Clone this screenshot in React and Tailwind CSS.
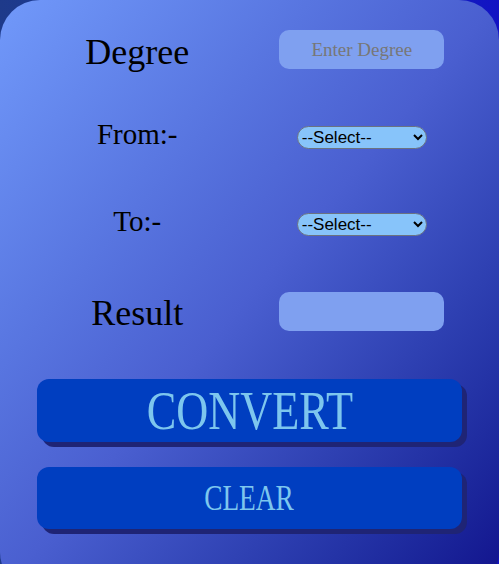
export default function App() {
  const serif = { fontFamily: '"Liberation Serif", "DejaVu Serif", serif' };
  return (
    <div className="h-[564px] w-[499px] overflow-hidden bg-gradient-to-r from-[#1e3a8a] to-[#1212c4]">
      <div
        className="h-[592px] w-[499px] rounded-[40px] bg-gradient-to-br from-[#7199fa] via-[#4a5fd0] to-[#12108c] pt-[6px]"
        style={serif}
      >
        <div className="grid grid-cols-2 px-[25px]">
          <div className="flex h-[87px] items-center justify-center pt-[4px] text-[36px] text-black">Degree</div>
          <div className="flex h-[87px] items-center justify-center">
            <input
              placeholder="Enter Degree"
              className="h-[39px] w-[165px] rounded-[10px] bg-[#7fa0f0] text-center text-[19px] outline-none placeholder:text-[#777777]"
              style={serif}
            />
          </div>

          <div className="flex h-[87px] items-center justify-center pb-[4px] text-[29px] text-black">From:-</div>
          <div className="flex h-[87px] items-center justify-center pt-[2px]">
            <select
              className="h-[23px] w-[130px] rounded-full border border-[#6b7280] bg-[#87c4fa] text-[17px] text-black"
              style={{ fontFamily: '"Liberation Sans", Arial, sans-serif' }}
            >
              <option>--Select--</option>
            </select>
          </div>

          <div className="flex h-[87px] items-center justify-center pb-[4px] text-[29px] text-black">To:-</div>
          <div className="flex h-[87px] items-center justify-center pt-[2px]">
            <select
              className="h-[23px] w-[130px] rounded-full border border-[#6b7280] bg-[#87c4fa] text-[17px] text-black"
              style={{ fontFamily: '"Liberation Sans", Arial, sans-serif' }}
            >
              <option>--Select--</option>
            </select>
          </div>

          <div className="flex h-[87px] items-center justify-center pt-[5px] text-[36px] text-black">Result</div>
          <div className="flex h-[87px] items-center justify-center pt-[2px]">
            <input className="h-[39px] w-[165px] rounded-[10px] bg-[#7fa0f0] outline-none" />
          </div>
        </div>

        <div className="mt-[25px] flex flex-col gap-[25px] px-[37px]">
          <button className="flex h-[63px] w-[425px] items-center justify-center rounded-[12px] bg-[#003ec0] text-[#7dc6ee] shadow-[5px_5px_0_#1f2475]">
            <span className="inline-block scale-x-[0.82] text-[54px] leading-none">CONVERT</span>
          </button>
          <button className="flex h-[62px] w-[425px] items-center justify-center rounded-[12px] bg-[#003ec0] text-[#7dc6ee] shadow-[5px_5px_0_#1f2475]">
            <span className="inline-block scale-x-[0.76] text-[36px] leading-none">CLEAR</span>
          </button>
        </div>
      </div>
    </div>
  );
}
